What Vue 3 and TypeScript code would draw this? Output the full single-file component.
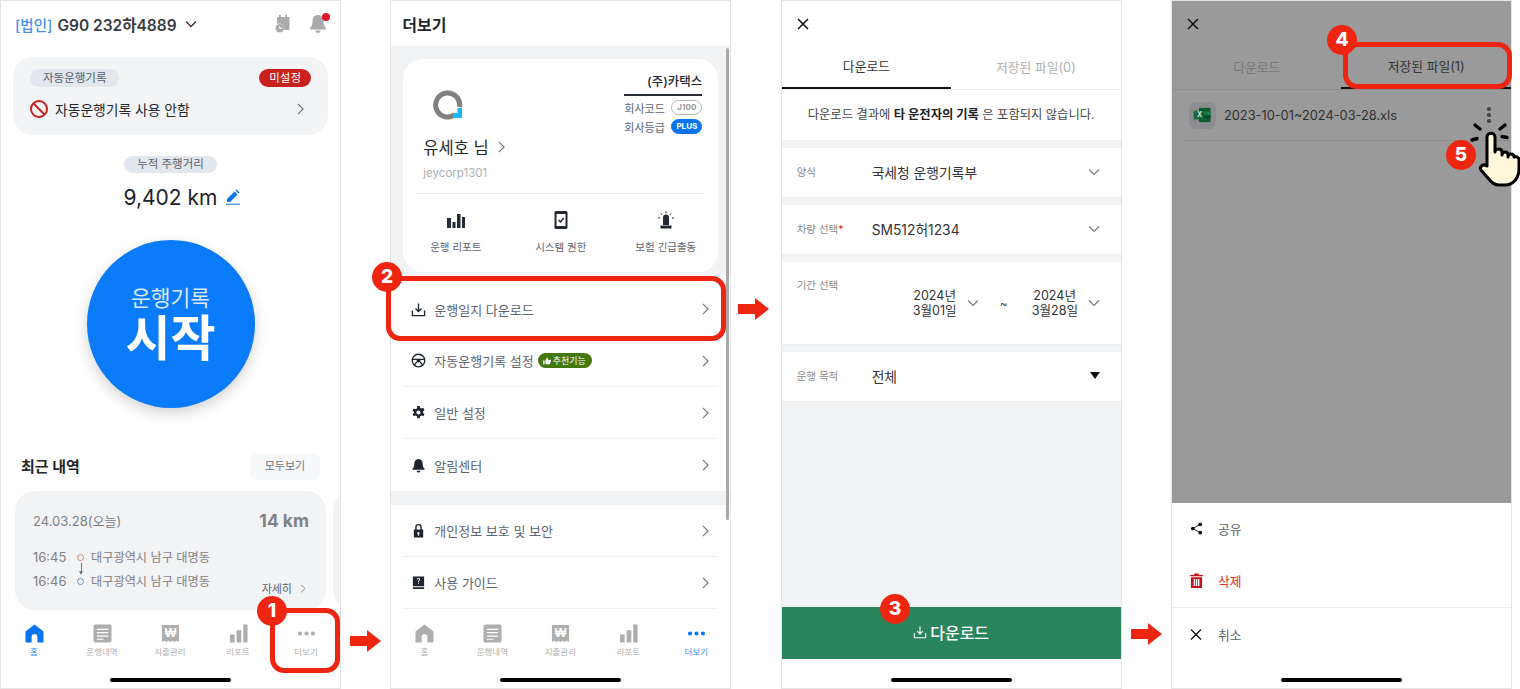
<template>
  <div class="board">
    <!-- 1: home -->
    <section class="phone">
      <header class="home-head">
        <span class="corp">[법인]</span>
        <span class="plate">G90 232하4889</span>
        <svg class="head-caret" viewBox="0 0 12 8"><path d="M1 1.5 6 6.5 11 1.5" /></svg>
        <svg class="head-cal" viewBox="0 0 16 18">
          <path d="M2 2h2V0h2v2h4V0h2v2h2.500v13H9A5 5 0 0 0 2 9z" />
          <circle cx="4.800" cy="13.200" r="4.200" />
          <path class="cal-hand" d="M4.800 10.800v2.600h2.200" />
        </svg>
        <span class="head-bell">
          <svg viewBox="0 0 16 18"><path d="M8 0c3.600 0 5.500 2.800 5.500 6.500 0 3.500 1 5 2.500 6.500v1.500H0V13c1.500-1.500 2.500-3 2.500-6.500C2.500 2.800 4.400 0 8 0zM5.500 15.500h5a2.500 2.500 0 0 1-5 0z" /></svg>
          <i class="bell-dot"></i>
        </span>
      </header>

      <div class="auto-card">
        <div class="auto-top">
          <span class="pill">자동운행기록</span>
          <span class="pill pill-red">미설정</span>
        </div>
        <div class="auto-row">
          <svg class="no-icon" viewBox="0 0 20 20"><circle cx="10" cy="10" r="8" /><path d="M4.500 4.500 15.500 15.500" /></svg>
          <span class="auto-text">자동운행기록 사용 안함</span>
          <svg class="chev" viewBox="0 0 8 14"><path d="M1 1 7 7 1 13" /></svg>
        </div>
      </div>

      <div class="dist">
        <span class="pill">누적 주행거리</span>
        <div class="dist-val">
          9,402 km
          <svg class="pencil" viewBox="0 0 14 16"><path d="M1 10 8.500 2.500 11.500 5.500 4 13H1zM9.500 1.500l1-1 3 3-1 1z" /><path class="pencil-line" d="M0 15.200h14" /></svg>
        </div>
      </div>

      <div class="start">
        <span class="start-sm">운행기록</span>
        <span class="start-lg">시작</span>
      </div>

      <div class="recent-head">
        <h2>최근 내역</h2>
        <span class="see-all">모두보기</span>
      </div>
      <div class="recent-row">
        <div class="trip">
          <div class="trip-top">
            <span>24.03.28(오늘)</span>
            <b>14 km</b>
          </div>
          <div class="trip-lines">
            <div class="trip-line"><span class="t">16:45</span><i class="dot dot-r"></i><span class="addr">대구광역시 남구 대명동</span></div>
            <div class="trip-line"><span class="t">16:46</span><i class="dot dot-b"></i><span class="addr">대구광역시 남구 대명동</span></div>
            <i class="trip-arrow"></i>
          </div>
          <div class="trip-more">자세히
            <svg class="chev" viewBox="0 0 8 14"><path d="M1 1 7 7 1 13" /></svg>
          </div>
        </div>
        <div class="trip trip-next"></div>
      </div>

      <nav class="tabbar">
        <div v-for="n in navItems" :key="n.label" class="tab" :class="{ on: n.label === '홈' }">
          <svg viewBox="0 0 20 20" class="tab-ico">
            <path v-for="d in n.fill" :key="d" :d="d" />
            <path v-for="d in n.cut" :key="d" :d="d" class="tab-cut" />
            <text v-if="n.won" x="10" y="13.500" class="tab-won">₩</text>
          </svg>
          <span>{{ n.label }}</span>
        </div>
      </nav>
      <div class="home-bar"></div>
    </section>

    <!-- 2: more -->
    <section class="phone">
      <header class="more-head">더보기</header>
      <div class="more-body">
        <div class="profile">
          <div class="profile-top">
            <div>
              <svg class="logo" viewBox="0 0 30 30">
                <path class="logo-ring" d="M22 24.500A12 12 0 1 1 26.500 17" />
                <path class="logo-sq" d="M20 23h4.500v-5H29v10h-9z" />
              </svg>
              <div class="who">유세호 님
                <svg class="chev" viewBox="0 0 8 14"><path d="M1 1 7 7 1 13" /></svg>
              </div>
              <div class="uid">jeycorp1301</div>
            </div>
            <div class="corp-box">
              <div class="corp-name">(주)카택스</div>
              <div class="corp-row">회사코드 <span class="tag">J100</span></div>
              <div class="corp-row">회사등급 <span class="tag tag-blue">PLUS</span></div>
            </div>
          </div>
          <div class="shortcuts">
            <div class="shortcut">
              <svg viewBox="0 0 18 18"><path d="M0 7h4v10H0zM5.500 11h3v6h-3zM10 3h3.500v14H10zM15 6h3v11h-3z" /></svg>
              <span>운행 리포트</span>
            </div>
            <div class="shortcut">
              <svg viewBox="0 0 18 18"><path fill-rule="evenodd" d="M4 0h10a1.500 1.500 0 0 1 1.500 1.500v15A1.500 1.500 0 0 1 14 18H4a1.500 1.500 0 0 1-1.500-1.500v-15A1.500 1.500 0 0 1 4 0zm.500 3v12h9V3z" /><path d="M6.500 9 8.500 11 11.800 7" class="check" /></svg>
              <span>시스템 권한</span>
            </div>
            <div class="shortcut">
              <svg viewBox="0 0 18 18"><path d="M6 6.500a3 3 0 0 1 6 0V14H6zM3.500 14.500h11v3h-11z" /><path class="rays" d="M9 .500v2M3.800 2.300 5 3.800M14.200 2.300 13 3.800M1 7h2M15 7h2" /></svg>
              <span>보험 긴급출동</span>
            </div>
          </div>
        </div>

        <div class="group group-a">
          <div v-for="r in menuA" :key="r.label" class="menu-row">
            <svg class="menu-ico" viewBox="0 0 16 16">
              <path v-for="d in r.fill" :key="d" :d="d" fill-rule="evenodd" />
              <path v-for="d in r.line" :key="d" :d="d" class="ico-line" />
            </svg>
            <span>{{ r.label }}</span>
            <span v-if="r.badge" class="rec">
              <svg viewBox="0 0 10 10"><path d="M0 4.500h2V9H0zM3 4.500 5 .500c1 0 1.300.8 1.100 1.700L5.800 3.500H9c.7 0 1 .5.800 1.100L8.800 8.500c-.1.300-.4.500-.8.500H3z" /></svg>
              {{ r.badge }}
            </span>
            <svg class="chev" viewBox="0 0 8 14"><path d="M1 1 7 7 1 13" /></svg>
          </div>
        </div>
        <div class="group group-b">
          <div v-for="r in menuB" :key="r.label" class="menu-row">
            <svg class="menu-ico" viewBox="0 0 16 16">
              <path v-for="d in r.fill" :key="d" :d="d" fill-rule="evenodd" />
              <path v-for="d in r.line" :key="d" :d="d" class="ico-line" />
            </svg>
            <span>{{ r.label }}</span>
            <svg class="chev" viewBox="0 0 8 14"><path d="M1 1 7 7 1 13" /></svg>
          </div>
        </div>
        <i class="scrollbar"></i>
      </div>
      <nav class="tabbar tabbar-2">
        <div v-for="n in navItems" :key="n.label" class="tab" :class="{ on: n.label === '더보기' }">
          <svg viewBox="0 0 20 20" class="tab-ico">
            <path v-for="d in n.fill" :key="d" :d="d" />
            <path v-for="d in n.cut" :key="d" :d="d" class="tab-cut" />
            <text v-if="n.won" x="10" y="13.500" class="tab-won">₩</text>
          </svg>
          <span>{{ n.label }}</span>
        </div>
      </nav>
      <div class="home-bar"></div>
    </section>

    <!-- 3: download form -->
    <section class="phone">
      <div class="close-bar">
        <svg class="x" viewBox="0 0 12 12"><path d="M1 1 11 11M11 1 1 11" /></svg>
      </div>
      <div class="tabs">
        <span class="tabs-item on">다운로드</span>
        <span class="tabs-item">저장된 파일(0)</span>
      </div>
      <div class="form-body">
        <p class="notice">다운로드 결과에 <b>타 운전자의 기록</b> 은 포함되지 않습니다.</p>
        <div class="field">
          <label>양식</label><span class="val">국세청 운행기록부</span>
          <svg class="caret" viewBox="0 0 12 8"><path d="M1 1.500 6 6.500 11 1.500" /></svg>
        </div>
        <div class="field">
          <label>차량 선택<em>*</em></label><span class="val">SM512허1234</span>
          <svg class="caret" viewBox="0 0 12 8"><path d="M1 1.500 6 6.500 11 1.500" /></svg>
        </div>
        <div class="field field-period">
          <label>기간 선택</label>
          <div class="dates">
            <span class="date">2024년<br />3월01일</span>
            <svg class="caret" viewBox="0 0 12 8"><path d="M1 1.500 6 6.500 11 1.500" /></svg>
            <span class="tilde">~</span>
            <span class="date">2024년<br />3월28일</span>
            <svg class="caret" viewBox="0 0 12 8"><path d="M1 1.500 6 6.500 11 1.500" /></svg>
          </div>
        </div>
        <div class="field">
          <label>운행 목적</label><span class="val">전체</span>
          <i class="tri"></i>
        </div>
      </div>
      <button type="button" class="dl-btn">
        <svg viewBox="0 0 16 16"><path d="M8 1.500v8.500M4.800 7 8 10.200 11.200 7M1.500 9v5.500h13V9" /></svg>
        다운로드
      </button>
      <div class="home-bar home-bar-3"></div>
    </section>

    <!-- 4: saved files + sheet -->
    <section class="phone">
      <div class="dim">
        <div class="close-bar">
          <svg class="x" viewBox="0 0 12 12"><path d="M1 1 11 11M11 1 1 11" /></svg>
        </div>
        <div class="tabs tabs-dim">
          <span class="tabs-item">다운로드</span>
          <span class="tabs-item on">저장된 파일(1)</span>
        </div>
        <div class="file">
          <span class="file-ico">
            <svg viewBox="0 0 20 18">
              <path fill="#0e5c34" d="M6 1h13v16H6z" />
              <path fill="#1c7a48" d="M12 5h7v4h-7z" />
              <path fill="#0b4a2a" d="M12 9h7v4h-7z" />
              <path fill="#17693e" d="M0 4h11v10H0z" />
            </svg>
            <b>X</b>
          </span>
          <span class="file-name">2023-10-01~2024-03-28.xls</span>
          <span class="kebab"><i></i><i></i><i></i></span>
        </div>
      </div>
      <div class="sheet">
        <div class="sheet-row sheet-share">
          <svg viewBox="0 0 14 14"><circle cx="11" cy="2.500" r="2" /><circle cx="11" cy="11.500" r="2" /><circle cx="3" cy="7" r="2" /><path class="ico-line" d="M11 2.500 3 7 11 11.500" /></svg>
          <span>공유</span>
        </div>
        <div class="sheet-row sheet-del">
          <svg viewBox="0 0 14 16"><path fill-rule="evenodd" d="M4.500 2V.500h5V2H14v1.500H0V2zM1 4.500h12V16H1zM4 6.500V14h1.500V6.500zM6.300 6.500V14h1.500V6.500zM8.600 6.500V14h1.500V6.500z" /></svg>
          <span>삭제</span>
        </div>
        <div class="sheet-row sheet-cancel">
          <svg class="x" viewBox="0 0 12 12"><path d="M1 1 11 11M11 1 1 11" /></svg>
          <span>취소</span>
        </div>
        <div class="home-bar home-bar-4"></div>
      </div>
    </section>

    <!-- call-outs laid over the screens -->
    <i v-for="b in frames" :key="b.id" class="frame" :class="b.id"></i>
    <b v-for="b in badges" :key="b.n" class="badge" :style="{ left: b.x + 'px', top: b.y + 'px' }">{{ b.n }}</b>
    <svg v-for="a in arrows" :key="a.x" class="arrow" :style="{ left: a.x + 'px', top: a.y + 'px' }" viewBox="0 0 31 22">
      <path d="M0 6h17V0l14 11-14 11v-6H0z" />
    </svg>
    <svg class="hand" viewBox="0 0 44 58">
      <path class="spark" d="M-3-5 2-1M27-5 22-1M-6 10-1 8.500M24 6.500 29 7.500" />
      <path class="hand-body" d="M9 36V7c0-5 8-5 8 0v15c0-4 7-4 7 0v3c0-4 6-4 6 0v2c0-4 6-4 6 0 3-1 5 1 5 3v9c0 8-5 16-14 16H21c-5 0-8-3-11-7l-7-8c-2-3 2-7 6-4z" />
    </svg>
  </div>
</template>

<script setup lang="ts">
interface NavItem { label: string; fill: string[]; cut?: string[]; won?: boolean }
interface MenuRow { label: string; fill?: string[]; line?: string[]; badge?: string }

const navItems: NavItem[] = [
  { label: '홈', fill: ['M10 .5 19.500 8v10.500a1 1 0 0 1-1 1h-5.500v-6a3 3 0 0 0-6 0v6H1.500a1 1 0 0 1-1-1V8z'] },
  {
    label: '운행내역',
    fill: ['M2.500 .5h15a2 2 0 0 1 2 2v15a2 2 0 0 1-2 2h-15a2 2 0 0 1-2-2v-15a2 2 0 0 1 2-2z'],
    cut: ['M4 5h12v1.300H4zM4 8.500h12v1.300H4zM4 12h12v1.300H4zM4 15.500h7v1H4z'],
  },
  {
    label: '지출관리',
    fill: ['M1 1h18v18l-2.500-1.500-2.300 1.500-2-1.500-2.200 1.500-2.200-1.500-2.200 1.500-2.100-1.500L1 19z'],
    won: true,
  },
  { label: '리포트', fill: ['M1 11h5v8.500H1zM8 6.500h5v13H8zM15 .5h4.500v19H15z'] },
  {
    label: '더보기',
    fill: ['M1 10a2.200 2.200 0 1 0 4.400 0 2.200 2.200 0 1 0-4.400 0zM7.800 10a2.200 2.200 0 1 0 4.400 0 2.200 2.200 0 1 0-4.400 0zM14.600 10a2.200 2.200 0 1 0 4.400 0 2.200 2.200 0 1 0-4.400 0z'],
  },
]

const menuA: MenuRow[] = [
  { label: '운행일지 다운로드', line: ['M8 1.500v8.500M4.800 7 8 10.200 11.200 7M1.500 9v5.500h13V9'] },
  {
    label: '자동운행기록 설정',
    badge: '추천기능',
    line: ['M8 1.300a6.700 6.700 0 1 0 0 13.400 6.700 6.700 0 1 0 0-13.400zM1.800 6.800h12.400M6.300 9.500 3.500 13M9.700 9.500l2.800 3.500'],
    fill: ['M8 6a2 2 0 1 0 0 4 2 2 0 1 0 0-4z'],
  },
  {
    label: '일반 설정',
    fill: ['M6.700 1h2.600l.4 2 1.500.8 1.900-.8 1.300 2.300-1.500 1.300v1.800l1.500 1.300-1.300 2.300-1.900-.8-1.500.8-.4 2H6.700l-.4-2-1.500-.8-1.900.8-1.300-2.300 1.500-1.300V7.300L1.600 6l1.300-2.300 1.900.8 1.500-.8zM8 5.800a2.200 2.200 0 1 0 0 4.400 2.200 2.200 0 1 0 0-4.400z'],
  },
  {
    label: '알림센터',
    fill: ['M8 1c3 0 4.500 2.300 4.500 5.300 0 2.800.8 4.100 2 5.200v1H1.500v-1c1.200-1.100 2-2.400 2-5.200C3.500 3.300 5 1 8 1zM6 13.500h4a2 2 0 0 1-4 0z'],
  },
]

const menuB: MenuRow[] = [
  {
    label: '개인정보 보호 및 보안',
    fill: ['M4.500 7V4.500a3.500 3.500 0 0 1 7 0V7H13v8.500H3V7zM6 7h4V4.500a2 2 0 0 0-4 0zM8 9.500a1.300 1.300 0 0 0-.6 2.400V13.500h1.200v-1.600A1.300 1.300 0 0 0 8 9.500z'],
  },
  {
    label: '사용 가이드',
    fill: ['M2 1.500h12V12H2zM2 13h12v1.800H2zM6.200 4.800C6.300 3.700 7 3.200 8 3.200s1.800.6 1.800 1.600c0 1.500-1.300 1.300-1.300 2.600h-1c0-1.800 1.300-1.700 1.300-2.600 0-.4-.3-.7-.8-.7s-.8.3-.8.8zM7.500 8.200h1v1h-1z'],
  },
]

const frames = [{ id: 'f1' }, { id: 'f2' }, { id: 'f4' }]

const badges = [
  { n: 1, x: 257, y: 596 },
  { n: 2, x: 372, y: 262 },
  { n: 3, x: 880, y: 594 },
  { n: 4, x: 1327, y: 25 },
  { n: 5, x: 1446, y: 140 },
]

const arrows = [
  { x: 350, y: 630 },
  { x: 738, y: 298 },
  { x: 1131, y: 623 },
]
</script>

<style>
html, body { margin: 0; background: #fff; }
</style>

<style scoped>
.board {
  position: relative;
  width: 1520px;
  height: 689px;
  display: grid;
  grid-template-columns: repeat(4, 341px);
  column-gap: 49.34px;
  overflow: hidden;
  font-family: Inter, "Noto Sans CJK KR", sans-serif;
  color: #333;
}
.phone {
  display: flex;
  flex-direction: column;
  height: 689px;
  box-sizing: border-box;
  border: 1px solid #e4e4e4;
  background: #fff;
  overflow: hidden;
}
i { font-style: normal; display: block; }
svg { display: block; flex: none; }
.chev { width: 7px; height: 12px; fill: none; stroke: #6c727a; stroke-width: 1.3; }

/* home */
.home-head { display: flex; align-items: center; height: 46px; padding-left: 14px; flex: none; }
.corp { font-size: 14.5px; color: #4a90e8; font-weight: 500; }
.plate { margin-left: 5px; font-size: 15.5px; font-weight: 600; color: #3a3d42; }
.head-caret { width: 12px; height: 8px; margin-left: 8px; fill: none; stroke: #333; stroke-width: 1.4; }
.head-cal { width: 16px; height: 18px; margin-left: 78px; fill: #a9abad; }
.head-cal .cal-hand { fill: none; stroke: #fff; stroke-width: 1; }
.head-bell { position: relative; margin-left: 19px; }
.head-bell svg { width: 16px; height: 18px; fill: #a9abad; }
.bell-dot { position: absolute; right: -4px; top: -2px; width: 8px; height: 8px; border-radius: 50%; background: #e0142a; }
.auto-card {
  margin: 10px 12px 0;
  height: 78px;
  flex: none;
  box-sizing: border-box;
  padding: 12px 17px 0;
  border-radius: 20px;
  background: #f3f4f6;
}
.auto-top { display: flex; justify-content: space-between; }
.pill {
  display: inline-block;
  height: 18px;
  line-height: 18px;
  padding: 0 13px;
  border-radius: 9px;
  background: #e1e7ec;
  color: #59606a;
  font-size: 11.5px;
}
.pill-red { background: #c9211e; color: #fff; padding: 0 10px; }
.auto-row { display: flex; align-items: center; margin-top: 12px; }
.no-icon { width: 20px; height: 20px; margin-left: -1px; fill: none; stroke: #c9211e; stroke-width: 2; }
.auto-text { margin-left: 6px; font-size: 13.8px; color: #24272c; }
.auto-row .chev { margin-left: auto; margin-right: 7px; }
.dist { display: flex; flex-direction: column; align-items: center; margin-top: 21px; flex: none; }
.dist .pill { height: 17px; line-height: 17px; }
.dist-val { display: flex; align-items: center; height: 30px; margin-top: 9px; font-size: 21px; color: #1e2228; padding-left: 22px; }
.pencil { width: 14px; height: 16px; margin-left: 8px; fill: #0a74f0; }
.pencil-line { stroke: #0a74f0; stroke-width: 1; fill: none; }
.start {
  display: flex;
  flex-direction: column;
  align-items: center;
  justify-content: center;
  align-self: center;
  flex: none;
  box-sizing: border-box;
  width: 168px;
  height: 168px;
  margin-top: 28px;
  padding-top: 4px;
  border-radius: 50%;
  background: #0a7bfb;
  box-shadow: 0 5px 14px rgba(0, 0, 0, .18);
  color: #fff;
}
.start-sm { font-size: 21.5px; line-height: 26px; color: #dce9fb; }
.start-lg { font-size: 49px; line-height: 56px; font-weight: 700; }
.recent-head { display: flex; align-items: center; justify-content: space-between; margin: 45px 20px 0 20px; height: 27px; flex: none; }
.recent-head h2 { margin: -3px 0 0; font-size: 15px; font-weight: 700; color: #24272c; }
.see-all { width: 70px; height: 27px; line-height: 27px; text-align: center; border-radius: 8px; background: #f7f8fa; color: #6e7379; font-size: 11px; }
.recent-row { display: flex; gap: 7px; margin: 11px 0 0 14px; flex: none; }
.trip {
  position: relative;
  flex: none;
  width: 311px;
  height: 119px;
  box-sizing: border-box;
  padding: 17px 17px 0 18px;
  border-radius: 20px;
  background: #f2f3f5;
  color: #7c8087;
  font-size: 13px;
}
.trip-next { width: 100px; }
.trip-top { display: flex; justify-content: space-between; align-items: center; height: 24px; }
.trip-top b { font-size: 17.5px; font-weight: 700; color: #7d8288; }
.trip-lines { position: relative; margin-top: 13px; }
.trip-line { display: flex; align-items: center; height: 24px; }
.trip-line .t { width: 44px; }
.addr { font-size: 12.2px; }
.dot { width: 5px; height: 5px; border-radius: 50%; border: 1px solid; margin-right: 7px; }
.dot-r { border-color: #ea7a76; }
.dot-b { border-color: #5d97d8; }
.trip-arrow { position: absolute; left: 47.5px; top: 18px; width: 1px; height: 11px; background: #777; }
.trip-arrow::after { content: ""; position: absolute; left: -2px; bottom: -1px; border: 2.5px solid transparent; border-top: 4px solid #777; border-bottom: 0; }
.trip-more { position: absolute; right: 20px; bottom: 14px; display: flex; align-items: center; gap: 8px; font-size: 11px; color: #5f646b; }
.trip-more .chev { width: 6px; height: 9px; }
.tabbar { display: grid; grid-template-columns: repeat(5, 68px); margin: auto 0 0 -1px; padding-top: 14px; background: #fff; flex: none; }
.tabbar-2 { margin-top: 0; padding-top: 15px; }
.tab { display: flex; flex-direction: column; align-items: center; color: #b0b0b0; font-size: 8.5px; line-height: 12px; }
.tab-ico { width: 19px; height: 19px; margin-bottom: 3px; fill: #aeaeae; }
.tab-cut { fill: #fff; }
.tab-won { fill: #fff; font-size: 13px; font-weight: 700; text-anchor: middle; font-family: "Liberation Sans", sans-serif; }
.tab.on { color: #3a8df2; }
.tab.on .tab-ico { fill: #0a74f0; }
.home-bar { flex: none; width: 121px; height: 4px; margin: 20px auto 6px; border-radius: 2px; background: #000; }

/* more */
.more-head { display: flex; align-items: center; height: 45px; padding-left: 11px; font-size: 16px; font-weight: 700; color: #24272c; flex: none; }
.more-body { position: relative; flex: 1; min-height: 0; background: #f2f3f5; overflow: hidden; }
.profile {
  margin: 13px 12px 0;
  height: 213px;
  box-sizing: border-box;
  padding: 0 13px;
  border-radius: 20px;
  background: #fff;
}
.profile-top { display: flex; justify-content: space-between; height: 135px; border-bottom: 1px solid #e8e8e8; padding: 13px 0 0 7px; box-sizing: border-box; }
.logo { width: 30px; height: 30px; margin: 18px 0 0 10px; fill: none; }
.logo-ring { stroke: #808080; stroke-width: 5; fill: none; }
.logo-sq { fill: #19b8f5; }
.who { display: flex; align-items: center; gap: 9px; margin: 15px 0 0; font-size: 16.5px; color: #24272c; height: 24px; }
.uid { margin-top: 7px; font-size: 11.5px; color: #aeb0b3; }
.corp-box { width: 78px; margin-right: 3px; }
.corp-name { height: 22px; text-align: right; border-bottom: 2px solid #2a2e35; font-size: 12.5px; font-weight: 500; color: #24272c; line-height: 20px; }
.corp-row { display: flex; justify-content: space-between; align-items: center; height: 19px; font-size: 11px; color: #5d6570; }
.corp-row:nth-child(2) { margin-top: 2px; }
.tag { width: 31px; height: 15px; box-sizing: border-box; border: 1px solid #b5b5b5; border-radius: 8px; line-height: 13px; text-align: center; font-size: 8px; font-weight: 700; color: #999; }
.tag-blue { background: #0a74f0; border-color: #0a74f0; color: #fff; }
.shortcuts { display: grid; grid-template-columns: repeat(3, 105px); justify-content: center; padding-top: 17px; margin: 0 -13px; }
.shortcut { display: flex; flex-direction: column; align-items: center; gap: 10px; font-size: 10.5px; color: #5d6570; }
.shortcut svg { width: 18px; height: 18px; fill: #232a35; }
.shortcut .check { fill: none; stroke: #232a35; stroke-width: 1.5; }
.shortcut .rays { fill: none; stroke: #232a35; stroke-width: 1; }
.group { background: #fff; padding: 0 12px; }
.group-a { margin-top: 4px; padding-top: 7px; }
.group-b { margin-top: 14px; }
.menu-row { display: flex; align-items: center; height: 52px; box-sizing: border-box; border-bottom: 1px solid #f0f1f2; padding: 0 9px 0 8px; font-size: 13px; color: #5d6570; }
.group-a .menu-row:first-child, .group-a .menu-row:last-child { border-bottom: 0; }
.menu-ico { width: 15px; height: 15px; margin-right: 8px; fill: #1d2530; }
.ico-line { fill: none; stroke: #1d2530; stroke-width: 1.4; }
.menu-row .chev { margin-left: auto; }
.rec { display: flex; align-items: center; gap: 2px; height: 15px; margin-left: 4px; padding: 0 6px 0 5px; border-radius: 8px; background: #44780f; color: #fff; font-size: 9px; }
.rec svg { width: 8px; height: 8px; fill: #fff; }
.scrollbar { position: absolute; right: 1px; top: 2px; width: 3px; height: 472px; background: #a9a9a9; border-radius: 2px; }

/* form */
.close-bar { display: flex; align-items: center; height: 45px; padding-left: 15px; flex: none; }
.x { width: 12px; height: 12px; fill: none; stroke: #111; stroke-width: 1.5; }
.tabs { display: grid; grid-template-columns: 1fr 1fr; height: 43px; flex: none; border-bottom: 1px solid #eee; }
.tabs-item { display: flex; align-items: center; justify-content: center; height: 43px; box-sizing: border-box; padding-bottom: 3px; font-size: 12.8px; color: #b0b0b0; }
.tabs-item.on { color: #333; border-bottom: 2px solid #111; }
.form-body { flex: 1; min-height: 0; background: #f2f3f5; display: flex; flex-direction: column; gap: 7px; }
.notice { margin: 0 0 1px; height: 50px; line-height: 50px; text-align: center; background: #fff; font-size: 12.3px; color: #444; flex: none; }
.notice b { font-weight: 700; color: #222; }
.field { display: flex; align-items: center; height: 50px; background: #fff; padding: 0 21px 2px 15px; flex: none; border-bottom: 1px solid #eee; box-sizing: border-box; }
.field label { width: 75px; flex: none; font-size: 10.5px; color: #8a8a8a; }
.field em { color: #e0142a; font-style: normal; }
.val { font-size: 13.8px; color: #333; }
.caret { width: 12px; height: 8px; fill: none; stroke: #777; stroke-width: 1.1; margin-left: auto; }
.tri { margin-left: auto; width: 0; height: 0; border: 5.5px solid transparent; border-top: 7px solid #111; border-bottom: 0; }
.field-period { height: 83px; align-items: flex-start; padding-top: 15px; }
.dates { display: flex; align-items: center; flex: 1; margin-top: 11px; }
.date { flex: none; width: 46px; margin-left: 40px; text-align: center; white-space: nowrap; font-size: 12.6px; line-height: 15px; color: #333; }
.dates .caret { margin-left: 9px; }
.tilde { margin-left: 21px; width: 7px; font-size: 12px; color: #555; }
.tilde + .date { margin-left: 25px; }
.tilde + .date + .caret { margin-left: 10px; }
.dl-btn {
  display: flex;
  align-items: center;
  justify-content: center;
  gap: 3px;
  height: 52px;
  flex: none;
  border: 0;
  padding: 0 0 2px;
  background: #2a855c;
  color: #fff;
  font: 500 16px Inter, "Noto Sans CJK KR", sans-serif;
}
.dl-btn svg { width: 14px; height: 14px; fill: none; stroke: #fff; stroke-width: 1.2; }
.home-bar-3 { margin: 19px auto 6px; }

/* saved */
.dim { flex: 1; min-height: 0; background: #9a9a9a; }
.tabs-dim { border-bottom-color: #8e8e8e; }
.tabs-dim .tabs-item { color: #777; }
.tabs-dim .tabs-item.on { color: #333; }
.file { display: flex; align-items: center; height: 51px; margin: 0 1px 0 13px; padding-left: 4px; box-sizing: border-box; border-bottom: 1px solid #8e8e8e; }
.file-ico { position: relative; display: flex; align-items: center; justify-content: center; width: 27px; height: 27px; border-radius: 7px; background: #8b8d90; }
.file-ico svg { width: 19px; height: 16px; }
.file-ico b { position: absolute; left: 8px; top: 8px; font-size: 7px; color: #ddd; }
.file-name { margin-left: 8px; font-size: 12.8px; color: #303030; }
.kebab { display: flex; flex-direction: column; gap: 2.5px; margin-left: auto; margin-right: 19px; }
.kebab i { width: 3.5px; height: 3.5px; border-radius: 50%; background: #444; }
.sheet { flex: none; height: 185px; box-sizing: border-box; background: #fff; }
.sheet-row { display: flex; align-items: center; box-sizing: border-box; height: 53px; padding-left: 18px; font-size: 12.8px; color: #5d6570; }
.sheet-row svg { width: 12px; height: 13px; margin-right: 16px; fill: #111; }
.sheet-row .ico-line { stroke: #111; stroke-width: 1; }
.sheet-share { height: 51px; }
.sheet-share svg { width: 13px; height: 13px; margin-right: 15px; }
.sheet-del { color: #ee2a2a; }
.sheet-del svg { width: 13px; height: 15px; fill: #c8101e; margin-right: 15px; }
.sheet-cancel { border-top: 1px solid #eee; }
.sheet-cancel .x { fill: none; stroke-width: 1.3; }
.home-bar-4 { margin: 18px auto 0; }

/* call-outs */
.frame { position: absolute; box-sizing: border-box; border: 5px solid #ee2611; }
.f1 { left: 270px; top: 608px; width: 70px; height: 65px; border-radius: 14px; }
.f2 { left: 386px; top: 276px; width: 340px; height: 65px; border-radius: 14px; }
.f4 { left: 1343px; top: 42px; width: 169px; height: 47px; border-radius: 14px; }
.badge {
  position: absolute;
  width: 30px;
  height: 30px;
  line-height: 30px;
  text-align: center;
  border-radius: 50%;
  background: #ee2611;
  color: #fff;
  font-size: 19px;
  font-weight: 800;
}
.arrow { position: absolute; width: 31px; height: 22px; fill: #ee2611; }
.hand { position: absolute; left: 1478px; top: 130px; width: 44px; height: 58px; overflow: visible; }
.hand-body { fill: #fff6dc; stroke: #000; stroke-width: 3; stroke-linejoin: round; }
.spark { fill: none; stroke: #000; stroke-width: 3.4; stroke-linecap: round; }
</style>
